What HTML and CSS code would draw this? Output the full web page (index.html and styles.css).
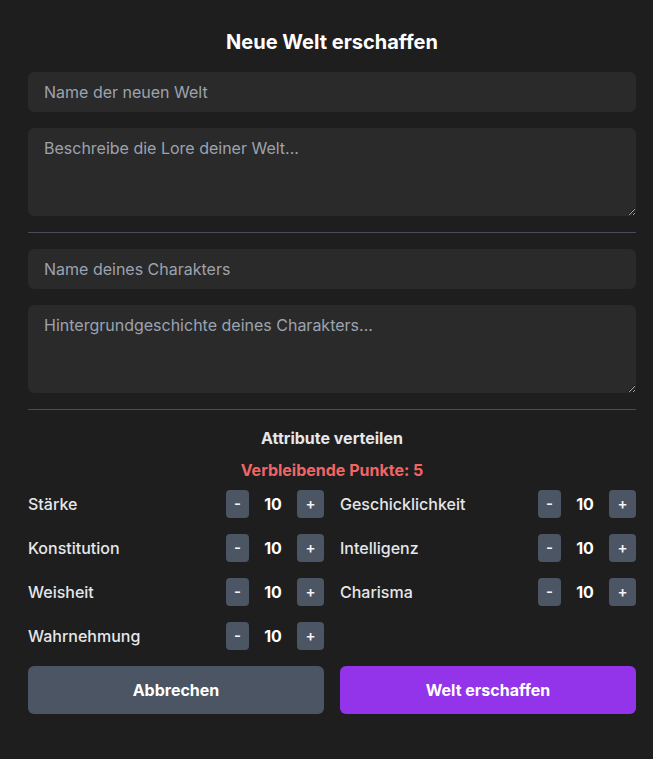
FILE: index.html
```html
<!DOCTYPE html>
<html lang="de">
<head>
<meta charset="utf-8">
<title>Neue Welt erschaffen</title>
<link rel="stylesheet" href="styles.css">
</head>
<body>
<div class="modal">
  <h2 class="title">Neue Welt erschaffen</h2>
  <input class="field" type="text" placeholder="Name der neuen Welt">
  <textarea class="field area" rows="3" placeholder="Beschreibe die Lore deiner Welt..."></textarea>
  <hr class="divider">
  <input class="field" type="text" placeholder="Name deines Charakters">
  <textarea class="field area" rows="3" placeholder="Hintergrundgeschichte deines Charakters..."></textarea>
  <hr class="divider">
  <h3 class="subtitle">Attribute verteilen</h3>
  <p class="points">Verbleibende Punkte: 5</p>
  <div class="attrs">
    <div class="attr"><span class="label">Stärke</span><div class="ctrl"><button class="step minus">-</button><span class="val">10</span><button class="step plus">+</button></div></div>
    <div class="attr"><span class="label">Geschicklichkeit</span><div class="ctrl"><button class="step minus">-</button><span class="val">10</span><button class="step plus">+</button></div></div>
    <div class="attr"><span class="label">Konstitution</span><div class="ctrl"><button class="step minus">-</button><span class="val">10</span><button class="step plus">+</button></div></div>
    <div class="attr"><span class="label">Intelligenz</span><div class="ctrl"><button class="step minus">-</button><span class="val">10</span><button class="step plus">+</button></div></div>
    <div class="attr"><span class="label">Weisheit</span><div class="ctrl"><button class="step minus">-</button><span class="val">10</span><button class="step plus">+</button></div></div>
    <div class="attr"><span class="label">Charisma</span><div class="ctrl"><button class="step minus">-</button><span class="val">10</span><button class="step plus">+</button></div></div>
    <div class="attr"><span class="label">Wahrnehmung</span><div class="ctrl"><button class="step minus">-</button><span class="val">10</span><button class="step plus">+</button></div></div>
  </div>
  <div class="actions">
    <button class="btn cancel">Abbrechen</button>
    <button class="btn create">Welt erschaffen</button>
  </div>
</div>
</body>
</html>
```
FILE: styles.css
```css
* { box-sizing: border-box; }
html, body { margin: 0; background: #1e1e1e; }
body {
  font-family: Inter, "Noto Sans", sans-serif;
  color: #e5e7eb;
}
.modal {
  padding: 28px 17px 28px 28px;
  display: flex;
  flex-direction: column;
  width: 653px;
}
.title {
  margin: 0 0 16px;
  font-size: 20px;
  line-height: 28px;
  font-weight: 700;
  color: #ffffff;
  text-align: center;
}
.field {
  display: block;
  width: 100%;
  background: #2a2a2a;
  border: none;
  border-radius: 6px;
  padding: 8px 16px;
  font-family: inherit;
  font-size: 16px;
  line-height: 24px;
  color: #e5e7eb;
  margin: 0 0 16px;
  outline: none;
}
.field::placeholder { color: #9ca3af; }
.area {
  height: 88px;
  resize: vertical;
  margin-bottom: 16px;
}
.divider {
  border: none;
  border-top: 1px solid #4b4b58;
  margin: 0 0 16px;
  height: 0;
}
.subtitle {
  margin: 0 0 8px;
  font-size: 16px;
  line-height: 24px;
  font-weight: 700;
  text-align: center;
  color: #e5e7eb;
}
.points {
  margin: 0 0 8px;
  font-size: 16px;
  line-height: 24px;
  font-weight: 700;
  text-align: center;
  color: #f06565;
}
.attrs {
  display: grid;
  grid-template-columns: 1fr 1fr;
  column-gap: 16px;
  row-gap: 16px;
}
.attr {
  display: flex;
  align-items: center;
  justify-content: space-between;
  height: 28px;
}
.label {
  font-size: 16px;
  font-weight: 500;
  color: #e5e7eb;
}
.ctrl {
  display: flex;
  align-items: center;
  gap: 8px;
}
.step {
  background: #4b5563;
  color: #f3f4f6;
  border: none;
  border-radius: 4px;
  padding: 0;
  font-family: inherit;
  font-size: 15px;
  line-height: 20px;
  font-weight: 600;
  height: 28px;
}
.minus { width: 23px; }
.plus { width: 27px; }
.val {
  width: 32px;
  text-align: center;
  font-size: 16px;
  font-weight: 700;
  color: #ffffff;
}
.actions {
  display: grid;
  grid-template-columns: 1fr 1fr;
  gap: 16px;
  margin-top: 16px;
}
.btn {
  height: 48px;
  border: none;
  border-radius: 6px;
  font-family: inherit;
  font-size: 16px;
  font-weight: 700;
  color: #ffffff;
}
.cancel { background: #4b5563; }
.create { background: #9333ea; }
```
